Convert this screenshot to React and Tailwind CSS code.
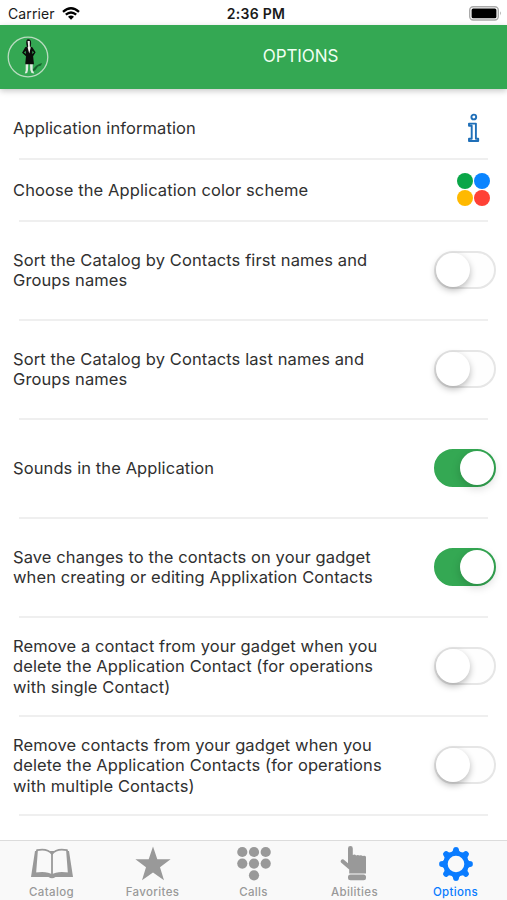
import { useState } from 'react'

const settings = [
    { id: 'firstNames', lines: ['Sort the Catalog by Contacts first names and', 'Groups names'], on: false },
    { id: 'lastNames', lines: ['Sort the Catalog by Contacts last names and', 'Groups names'], on: false },
    { id: 'sounds', lines: ['Sounds in the Application'], on: true },
    { id: 'save', lines: ['Save changes to the contacts on your gadget', 'when creating or editing Applixation Contacts'], on: true },
    { id: 'removeOne', lines: ['Remove a contact from your gadget when you', 'delete the Application Contact (for operations', 'with single Contact)'], on: false },
    { id: 'removeMany', lines: ['Remove contacts from your gadget when you', 'delete the Application Contacts (for operations', 'with multiple Contacts)'], on: false },
]

const tabs = [
    { name: 'Catalog', Icon: BookIcon },
    { name: 'Favorites', Icon: StarIcon },
    { name: 'Calls', Icon: KeypadIcon },
    { name: 'Abilities', Icon: HandIcon },
    { name: 'Options', Icon: GearIcon },
]

function BookIcon() {
    return (
        <svg width="44" height="34" viewBox="0 0 44 34" fill="none" stroke="currentColor" strokeLinejoin="round">
            <path d="M5 4 1 30h17.500q3.500 2.600 7 0H43L39 4z" fill="currentColor" stroke="none" />
            <path d="M7 3.200C13 2 19 3 22 7c3-4 9-5 15-3.800l1.800 23.300c-6-1-12.800-1-16.800 2-4-3-10.800-3-16.800-2z" fill="#f9f9f9" strokeWidth="1.800" />
            <path d="M22 7v21.500" strokeWidth="1.800" />
        </svg>
    )
}

function StarIcon() {
    return (
        <svg width="36" height="36" viewBox="0 0 36 36" fill="currentColor">
            <path d="M18 .6l4.300 12.600h13.300l-10.600 8 4 13L18 26.400 7 34.200l4-13L.4 13.200h13.300z" />
        </svg>
    )
}

function KeypadIcon() {
    return (
        <svg width="36" height="36" viewBox="0 0 36 36" fill="currentColor">
            <circle cx="6.300" cy="6" r="5.100" />
            <circle cx="18" cy="6" r="5.100" />
            <circle cx="29.700" cy="6" r="5.100" />
            <circle cx="6.300" cy="17.600" r="5.100" />
            <circle cx="18" cy="17.600" r="5.100" />
            <circle cx="29.700" cy="17.600" r="5.100" />
            <circle cx="18" cy="29.300" r="5.100" />
        </svg>
    )
}

function HandIcon() {
    return (
        <svg width="36" height="36" viewBox="0 0 36 36" fill="currentColor">
            <path d="M11 2.400a2.400 2.400 0 0 1 4.800 0V9q2-1 3.300.4 2-1 3.300.2 2-.8 3.300.4 2.800-1 3.300 1v16.500H12.200V23.500L4 16.500a2 2 0 0 1 2.600-2.900L11 17.200z" />
            <rect x="11" y="28.600" width="18" height="5.600" rx="2.500" />
        </svg>
    )
}

function GearIcon() {
    return (
        <svg width="36" height="36" viewBox="-18 -18 36 36" fill="currentColor">
            <circle r="10.600" fill="none" stroke="currentColor" strokeWidth="4.600" />
            {[0, 45, 90, 135, 180, 225, 270, 315].map((angle) => (
                <path key={angle} d="M-4.600-11.600Q-2.800-12.700-2.700-15.200Q-2.600-16.900 0-16.900Q2.600-16.900 2.700-15.200Q2.800-12.700 4.600-11.600z" transform={`rotate(${angle})`} />
            ))}
        </svg>
    )
}

function InfoIcon() {
    return (
        <svg width="14" height="30" viewBox="0 0 14 30" fill="none" stroke="#1f6fb8" strokeWidth="1.900">
            <circle cx="6.800" cy="4" r="2.400" />
            <path d="M2 10.600h6.900v15.200h2.300v2.200H2v-2.200h2.700V12.800H2z" strokeLinejoin="round" />
        </svg>
    )
}

function Avatar() {
    return (
        <svg className="mb-px" width="42" height="42" viewBox="0 0 42 42">
            <circle cx="21" cy="21" r="19.800" fill="none" stroke="#b9dcc0" strokeWidth="1.300" />
            <path d="M25 35q4-7 10-8l-1 2.500-3 1-3 4z" fill="#17612c" />
            <path d="M18.700 27h2.600l-.3 7-.8 3-2.400.6.900-3zM23 27h2.800l-.2 7 1.700 3.400-2.800-.3-1.200-3z" fill="#dfece0" />
            <path d="M18.200 11.200 21.300 10l4 1.200 3.300 5-2.500 4 .9 8h-8.800l.8-8-3.900-3.500z" fill="#090b09" />
            <path d="M19.400 9q-1-6 2.200-5.700 3.400.3 2.300 6.700l-1.200 1-2.500-.2z" fill="#111" />
            <path d="M20.600 5h2.200v5.400l.9 1-1.400 6-1.700-6 .6-1z" fill="#f3f3ed" />
            <path d="M17 16.500l1.600-1.700.4 3.200zM27 16.500l-1.500-1.700-.4 3.200z" fill="#34a853" />
        </svg>
    )
}

function StatusBar() {
    return (
        <div className="flex h-[25px] shrink-0 items-center pl-2 pr-[5px] pt-[3px] text-[13px] leading-none text-[#1a1a1a]">
            <div className="flex flex-1 items-center gap-[7px]">
                <span className="text-[14px] tracking-[0.1px]">Carrier</span>
                <svg className="-mt-[2px]" width="18" height="13" viewBox="0 0 18 13" fill="none" stroke="#000" strokeWidth="2.300">
                    <path d="M1 4.800q8-7 16 0M3.800 7.700q5.200-4.500 10.400 0" />
                    <path d="M6 9.700q3-2.400 6 0l-3 3z" fill="#000" stroke="none" />
                </svg>
            </div>
            <span className="pl-[2px] text-[14px] font-semibold tracking-[0.25px]">2:36 PM</span>
            <div className="flex flex-1 justify-end">
                <svg className="-mt-[2px]" width="33" height="15" viewBox="0 0 33 15">
                    <rect x=".7" y=".7" width="28.600" height="13.300" rx="3.500" fill="#fff" stroke="#aaa" strokeWidth="1.400" />
                    <rect x="2.600" y="2.500" width="24.800" height="9.700" rx="1.500" />
                    <path d="M31 5.200q1.800 2.200 0 4.400z" fill="#888" />
                </svg>
            </div>
        </div>
    )
}

function Switch({ on, onClick }) {
    return (
        <button
            role="switch"
            aria-checked={on}
            onClick={onClick}
            className={`mb-[2px] flex h-[38px] w-[62px] shrink-0 items-center rounded-full border-2 ${
                on ? 'justify-end border-[#34a853] bg-[#34a853]' : 'justify-start border-[#e6e6e6] bg-[#fefefe]'
            }`}
        >
            <span className={`size-[34px] rounded-full bg-white ${on ? 'shadow-[0_3px_10px_rgba(0,0,0,0.18)]' : 'shadow-[0_3px_7px_rgba(0,0,0,0.28)]'}`} />
        </button>
    )
}

function Row({ className, lines, children }) {
    return (
        <div className={`relative flex shrink-0 items-center justify-between pl-[13px] ${className}`}>
            <div className="mb-[0.500px] whitespace-nowrap text-[16.500px] leading-[20.500px] tracking-[0.1px] text-[#303030]">
                {lines.map((line) => (
                    <p key={line}>{line}</p>
                ))}
            </div>
            {children}
            <div className="absolute -bottom-px left-[19px] right-[19px] h-[2px] bg-[#efefef]" />
        </div>
    )
}

export default function App() {
    const [values, setValues] = useState(() => Object.fromEntries(settings.map((s) => [s.id, s.on])))
    const [active, setActive] = useState('Options')

    const toggle = (id) => setValues((prev) => ({ ...prev, [id]: !prev[id] }))

    return (
        <div className="flex h-[900px] w-[507px] flex-col overflow-hidden bg-white font-[Inter,sans-serif]">
            <StatusBar />

            <header className="z-10 flex h-16 shrink-0 items-center bg-[#34a853] pl-[7px] shadow-[0_2px_6px_rgba(0,0,0,0.22)]">
                <Avatar />
                <h1 className="flex-1 pl-[45px] text-center text-[17px] tracking-[-0.1px] text-[#effff2]">OPTIONS</h1>
            </header>

            <main className="flex flex-1 flex-col overflow-hidden pt-2">
                <Row className="h-[62px] pr-[26px]" lines={['Application information']}>
                    <InfoIcon />
                </Row>
                <Row className="h-[62px] pr-[17px]" lines={['Choose the Application color scheme']}>
                    <div className="mb-px grid grid-cols-2 gap-px">
                        <span className="size-4 rounded-full bg-[#0aa648]" />
                        <span className="size-4 rounded-full bg-[#0a84ff]" />
                        <span className="size-4 rounded-full bg-[#ffb900]" />
                        <span className="size-4 rounded-full bg-[#ff4136]" />
                    </div>
                </Row>
                {settings.map(({ id, lines }) => (
                    <Row key={id} className="h-[99px] pr-[11px]" lines={lines}>
                        <Switch on={values[id]} onClick={() => toggle(id)} />
                    </Row>
                ))}
            </main>

            <nav className="flex h-[60px] shrink-0 border-t border-[#dcdcdc] bg-[#f9f9f9] px-[1px]">
                {tabs.map(({ name, Icon }) => (
                    <button
                        key={name}
                        onClick={() => setActive(name)}
                        className={`flex flex-1 flex-col items-center pt-[5px] ${active === name ? 'text-[#0a7cff]' : 'text-[#999]'}`}
                    >
                        <span className="flex h-9 items-center">
                            <Icon />
                        </span>
                        <span className="mt-[3px] text-[11.500px] font-medium leading-[14px] tracking-[0.35px]">{name}</span>
                    </button>
                ))}
            </nav>
        </div>
    )
}
